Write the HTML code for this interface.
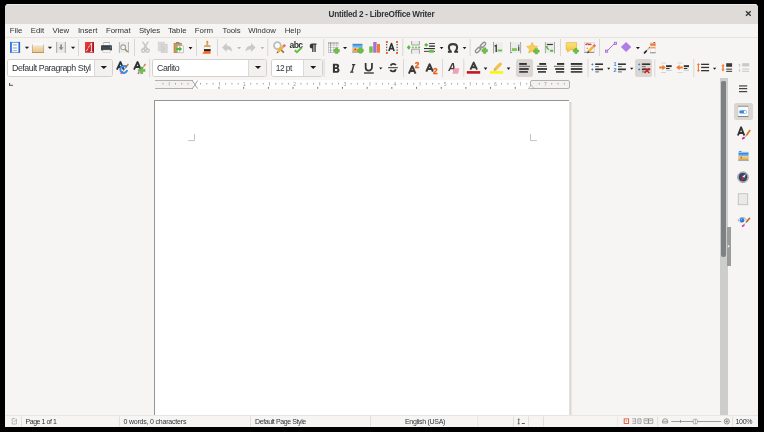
<!DOCTYPE html>
<html><head><meta charset="utf-8">
<style>
*{box-sizing:border-box;margin:0;padding:0}
html,body{width:764px;height:432px;overflow:hidden;background:#000}
body{font-family:"Liberation Sans",sans-serif;position:relative}
.a{position:absolute}
.t{position:absolute;white-space:pre;color:#2e3436;line-height:1}
.mn{font-size:7.8px;top:26.8px}
.st{font-size:7px;top:417.6px;color:#2e3436}
.combo{position:absolute;top:59px;height:17.5px;background:#fff;border:1px solid #d5d0cb;border-radius:2.5px;overflow:hidden}
.cbtn{position:absolute;top:0;bottom:0;right:0;background:#f3f1ef;border-left:1px solid #dcd8d4}
.ct{position:absolute;top:3.8px;font-size:8.8px;letter-spacing:-0.45px;color:#2e3436;white-space:pre;line-height:1}
#svg{position:absolute;left:0;top:0}
</style></head><body><div id="root" style="position:absolute;left:0;top:0;width:764px;height:432px;will-change:transform">
<!-- window -->
<div class="a" style="left:5px;top:4px;width:753px;height:423px;background:#f6f5f4;border-radius:4px 4px 0 0;overflow:hidden">
  <div class="a" style="left:0;top:0;width:753px;height:20px;background:#dedbd8;border-top:1px solid #ecebe9"></div>
</div>
<div class="t" style="left:328.5px;top:11.2px;font-size:8.2px;font-weight:bold;letter-spacing:-0.25px;color:#2e3436">Untitled 2 - LibreOffice Writer</div>

<!-- menu -->
<div class="a" style="left:5px;top:37px;width:753px;height:1px;background:#e6e3df"></div>
<div class="t mn" style="left:9.8px">File</div>
<div class="t mn" style="left:30.8px">Edit</div>
<div class="t mn" style="left:52.4px">View</div>
<div class="t mn" style="left:77.9px">Insert</div>
<div class="t mn" style="left:105.9px">Format</div>
<div class="t mn" style="left:138.9px">Styles</div>
<div class="t mn" style="left:167.9px">Table</div>
<div class="t mn" style="left:194.8px">Form</div>
<div class="t mn" style="left:222.5px">Tools</div>
<div class="t mn" style="left:248.2px">Window</div>
<div class="t mn" style="left:284.7px">Help</div>

<!-- combos -->
<div class="combo" style="left:7px;width:106px"><div class="ct" style="left:4px;width:78.5px;overflow:hidden">Default Paragraph Style</div><div class="cbtn" style="width:17.8px"></div></div>
<div class="combo" style="left:152px;width:114.5px"><div class="ct" style="left:4px">Carlito</div><div class="cbtn" style="width:18px"></div></div>
<div class="combo" style="left:271px;width:51.5px"><div class="ct" style="left:3.8px;top:4px;font-size:8.4px;letter-spacing:-0.55px">12 pt</div><div class="cbtn" style="width:18.3px"></div></div>

<!-- pressed buttons -->
<div class="a" style="left:516px;top:59px;width:17px;height:17.8px;background:#dad6d2;border-radius:2.5px"></div>
<div class="a" style="left:635px;top:59px;width:17px;height:17.8px;background:#dad6d2;border-radius:2.5px"></div>
<div class="a" style="left:734px;top:103px;width:18.8px;height:17.2px;background:#dad6d2;border-radius:2.5px"></div>

<!-- ruler -->
<div class="a" style="left:154.5px;top:80px;width:415px;height:9px;background:#fff"></div>
<div class="a" style="left:154.5px;top:80px;width:38px;height:9px;background:#f3f2f0;border-top:1px solid #b3afab;border-bottom:1px solid #b3afab"></div>
<div class="a" style="left:530px;top:80px;width:39.5px;height:9px;background:#f3f2f0;border:1px solid #b3afab;border-radius:2px"></div>

<!-- page -->
<div class="a" style="left:154px;top:100px;width:415px;height:315px;background:#fff;border-left:1px solid #959595;border-top:1px solid #959595"></div>
<div class="a" style="left:569px;top:101.5px;width:2.5px;height:313.5px;background:linear-gradient(90deg,#e6e4e2,#d9d7d5 45%,#efedeb)"></div>

<!-- scrollbar -->
<div class="a" style="left:720px;top:78px;width:8px;height:337px;background:#cdcdcc"></div>
<div class="a" style="left:721px;top:80.5px;width:4.5px;height:176px;background:#7e8183;border-radius:1.5px 1.5px 2.2px 2.2px"></div>
<div class="a" style="left:727px;top:227px;width:4px;height:39px;background:#999c9d"></div>

<!-- status bar -->
<div class="a" style="left:5px;top:415px;width:753px;height:1px;background:#e8e5e2"></div>
<div class="t st" style="left:25.5px;letter-spacing:-0.45px">Page 1 of 1</div>
<div class="t st" style="left:123.5px;letter-spacing:-0.2px">0 words, 0 characters</div>
<div class="t st" style="left:255px;letter-spacing:-0.4px">Default Page Style</div>
<div class="t st" style="left:405px;letter-spacing:-0.3px">English (USA)</div>
<div class="t st" style="left:735.5px;letter-spacing:-0.3px">100%</div>

<svg id="svg" width="764" height="432" viewBox="0 0 764 432">
<!-- ICONS -->
<rect x="162.49" y="82.9" width="0.9" height="1.6" fill="#9c9c9c"/>
<rect x="168.77" y="82" width="0.9" height="3.6" fill="#b5b5b5"/>
<rect x="175.04" y="82.9" width="0.9" height="1.6" fill="#9c9c9c"/>
<rect x="181.31" y="82.9" width="0.9" height="1.6" fill="#9c9c9c"/>
<rect x="187.58" y="82.9" width="0.9" height="1.6" fill="#9c9c9c"/>
<rect x="200.12" y="82.9" width="0.9" height="1.6" fill="#9c9c9c"/>
<rect x="206.39" y="82.9" width="0.9" height="1.6" fill="#9c9c9c"/>
<rect x="212.66" y="82.9" width="0.9" height="1.6" fill="#9c9c9c"/>
<rect x="218.94" y="82" width="0.9" height="3.6" fill="#b5b5b5"/>
<rect x="225.21" y="82.9" width="0.9" height="1.6" fill="#9c9c9c"/>
<rect x="231.48" y="82.9" width="0.9" height="1.6" fill="#9c9c9c"/>
<rect x="237.75" y="82.9" width="0.9" height="1.6" fill="#9c9c9c"/>
<text x="244.47" y="85.7" text-anchor="middle" font-family="Liberation Sans" font-size="5" fill="#9a9a9a">1</text>
<rect x="250.29" y="82.9" width="0.9" height="1.6" fill="#9c9c9c"/>
<rect x="256.56" y="82.9" width="0.9" height="1.6" fill="#9c9c9c"/>
<rect x="262.83" y="82.9" width="0.9" height="1.6" fill="#9c9c9c"/>
<rect x="269.11" y="82" width="0.9" height="3.6" fill="#b5b5b5"/>
<rect x="275.38" y="82.9" width="0.9" height="1.6" fill="#9c9c9c"/>
<rect x="281.65" y="82.9" width="0.9" height="1.6" fill="#9c9c9c"/>
<rect x="287.92" y="82.9" width="0.9" height="1.6" fill="#9c9c9c"/>
<text x="294.64" y="85.7" text-anchor="middle" font-family="Liberation Sans" font-size="5" fill="#9a9a9a">2</text>
<rect x="300.46" y="82.9" width="0.9" height="1.6" fill="#9c9c9c"/>
<rect x="306.73" y="82.9" width="0.9" height="1.6" fill="#9c9c9c"/>
<rect x="313.00" y="82.9" width="0.9" height="1.6" fill="#9c9c9c"/>
<rect x="319.28" y="82" width="0.9" height="3.6" fill="#b5b5b5"/>
<rect x="325.55" y="82.9" width="0.9" height="1.6" fill="#9c9c9c"/>
<rect x="331.82" y="82.9" width="0.9" height="1.6" fill="#9c9c9c"/>
<rect x="338.09" y="82.9" width="0.9" height="1.6" fill="#9c9c9c"/>
<text x="344.81" y="85.7" text-anchor="middle" font-family="Liberation Sans" font-size="5" fill="#9a9a9a">3</text>
<rect x="350.63" y="82.9" width="0.9" height="1.6" fill="#9c9c9c"/>
<rect x="356.90" y="82.9" width="0.9" height="1.6" fill="#9c9c9c"/>
<rect x="363.17" y="82.9" width="0.9" height="1.6" fill="#9c9c9c"/>
<rect x="369.44" y="82" width="0.9" height="3.6" fill="#b5b5b5"/>
<rect x="375.72" y="82.9" width="0.9" height="1.6" fill="#9c9c9c"/>
<rect x="381.99" y="82.9" width="0.9" height="1.6" fill="#9c9c9c"/>
<rect x="388.26" y="82.9" width="0.9" height="1.6" fill="#9c9c9c"/>
<text x="394.98" y="85.7" text-anchor="middle" font-family="Liberation Sans" font-size="5" fill="#9a9a9a">4</text>
<rect x="400.80" y="82.9" width="0.9" height="1.6" fill="#9c9c9c"/>
<rect x="407.07" y="82.9" width="0.9" height="1.6" fill="#9c9c9c"/>
<rect x="413.34" y="82.9" width="0.9" height="1.6" fill="#9c9c9c"/>
<rect x="419.62" y="82" width="0.9" height="3.6" fill="#b5b5b5"/>
<rect x="425.89" y="82.9" width="0.9" height="1.6" fill="#9c9c9c"/>
<rect x="432.16" y="82.9" width="0.9" height="1.6" fill="#9c9c9c"/>
<rect x="438.43" y="82.9" width="0.9" height="1.6" fill="#9c9c9c"/>
<text x="445.15" y="85.7" text-anchor="middle" font-family="Liberation Sans" font-size="5" fill="#9a9a9a">5</text>
<rect x="450.97" y="82.9" width="0.9" height="1.6" fill="#9c9c9c"/>
<rect x="457.24" y="82.9" width="0.9" height="1.6" fill="#9c9c9c"/>
<rect x="463.51" y="82.9" width="0.9" height="1.6" fill="#9c9c9c"/>
<rect x="469.79" y="82" width="0.9" height="3.6" fill="#b5b5b5"/>
<rect x="476.06" y="82.9" width="0.9" height="1.6" fill="#9c9c9c"/>
<rect x="482.33" y="82.9" width="0.9" height="1.6" fill="#9c9c9c"/>
<rect x="488.60" y="82.9" width="0.9" height="1.6" fill="#9c9c9c"/>
<text x="495.32" y="85.7" text-anchor="middle" font-family="Liberation Sans" font-size="5" fill="#9a9a9a">6</text>
<rect x="501.14" y="82.9" width="0.9" height="1.6" fill="#9c9c9c"/>
<rect x="507.41" y="82.9" width="0.9" height="1.6" fill="#9c9c9c"/>
<rect x="513.68" y="82.9" width="0.9" height="1.6" fill="#9c9c9c"/>
<rect x="519.95" y="82" width="0.9" height="3.6" fill="#b5b5b5"/>
<rect x="526.23" y="82.9" width="0.9" height="1.6" fill="#9c9c9c"/>
<rect x="538.77" y="82.9" width="0.9" height="1.6" fill="#9c9c9c"/>
<text x="545.49" y="85.7" text-anchor="middle" font-family="Liberation Sans" font-size="5" fill="#9a9a9a">7</text>
<rect x="551.31" y="82.9" width="0.9" height="1.6" fill="#9c9c9c"/>
<rect x="557.58" y="82.9" width="0.9" height="1.6" fill="#9c9c9c"/>
<rect x="563.85" y="82.9" width="0.9" height="1.6" fill="#9c9c9c"/>
<rect x="218.49" y="86.9" width="1" height="1.9" fill="#777"/>
<rect x="243.18" y="86.9" width="1" height="1.9" fill="#777"/>
<rect x="267.87" y="86.9" width="1" height="1.9" fill="#777"/>
<rect x="292.56" y="86.9" width="1" height="1.9" fill="#777"/>
<rect x="317.25" y="86.9" width="1" height="1.9" fill="#777"/>
<rect x="341.94" y="86.9" width="1" height="1.9" fill="#777"/>
<rect x="366.63" y="86.9" width="1" height="1.9" fill="#777"/>
<rect x="391.32" y="86.9" width="1" height="1.9" fill="#777"/>
<rect x="416.01" y="86.9" width="1" height="1.9" fill="#777"/>
<rect x="440.70" y="86.9" width="1" height="1.9" fill="#777"/>
<rect x="465.39" y="86.9" width="1" height="1.9" fill="#777"/>
<rect x="490.08" y="86.9" width="1" height="1.9" fill="#777"/>
<rect x="514.77" y="86.9" width="1" height="1.9" fill="#777"/><!-- separators row1 -->
<g fill="#dad6d2">
<rect x="78" y="39" width="1" height="17"/><rect x="134" y="39" width="1" height="17"/><rect x="196" y="39" width="1" height="17"/>
<rect x="217" y="39" width="1" height="17"/><rect x="267.3" y="39" width="1" height="17"/><rect x="323.2" y="39" width="1" height="17"/>
<rect x="402.3" y="39" width="1" height="17"/><rect x="469.6" y="39" width="1" height="17"/><rect x="560" y="39" width="1" height="17"/>
<rect x="599" y="39" width="1" height="17"/>
</g>
<!-- separators row2 -->
<g fill="#dad6d2">
<rect x="149.2" y="59" width="1" height="18"/><rect x="323.6" y="59" width="1" height="18"/><rect x="403" y="59" width="1" height="18"/>
<rect x="442" y="59" width="1" height="18"/><rect x="463.3" y="59" width="1" height="18"/><rect x="587.5" y="59" width="1" height="18"/>
<rect x="654.3" y="59" width="1" height="18"/><rect x="693.3" y="59" width="1" height="18"/>
</g>
<!-- dropdown arrows -->
<g fill="#1a1a1a">
<path d="M24.8 46.8h4.3l-2.15 2.3z"/><path d="M47.8 46.8h4.3l-2.15 2.3z"/><path d="M70.9 46.8h4.3l-2.15 2.3z"/>
<path d="M188.6 46.9h3.8l-1.9 2.5z"/><path d="M343 46.9h4.1l-2.05 2.3z"/><path d="M439.8 46.9h3.6l-1.8 2.3z"/>
<path d="M462.7 46.9h3.6l-1.8 2.3z"/><path d="M635.9 46.9h4l-2 2.3z"/>
<path d="M100.6 66h6.4l-3.2 3.1z"/><path d="M254.9 66.1h6.2l-3.1 2.9z"/><path d="M310.2 66.1h6l-3 2.9z"/>
<path d="M379.2 67.6h3.1l-1.55 1.9z"/><path d="M483.8 67.6h3.5l-1.75 2.3z"/><path d="M506.8 67.6h3.5l-1.75 2.3z"/>
<path d="M607.2 67.8h3l-1.5 2z"/><path d="M630.1 67.8h3.2l-1.6 2z"/><path d="M713 67.8h3.3l-1.65 2z"/>
</g>
<g fill="#b8b8b8"><path d="M237.2 46.9h3.9l-1.95 2.3z"/><path d="M260.5 46.9h3.8l-1.9 2.3z"/></g>

<!-- new doc -->
<defs><linearGradient id="gnd" x1="0" y1="0" x2="1" y2="0"><stop offset="0" stop-color="#2a6cd8"/><stop offset="0.3" stop-color="#6aaaf4"/><stop offset="0.75" stop-color="#5aa2f2"/><stop offset="1" stop-color="#1c56c4"/></linearGradient></defs>
<rect x="10" y="41.9" width="10.1" height="11" fill="url(#gnd)"/>
<rect x="12.1" y="43" width="6.2" height="8.9" fill="#fdfdfd"/>
<g fill="#ababab"><rect x="13.1" y="44.3" width="3.8" height="1.2"/><rect x="13.1" y="47.4" width="3.8" height="1.2"/><rect x="13.1" y="50" width="3.8" height="0.9"/></g>
<!-- open -->
<defs><linearGradient id="gop" x1="0" y1="0" x2="0" y2="1"><stop offset="0" stop-color="#f6e0b8"/><stop offset="1" stop-color="#e6c28a"/></linearGradient></defs>
<rect x="32.2" y="43.3" width="11.6" height="3" fill="#fbfbfb"/>
<rect x="32" y="44.2" width="0.8" height="2" fill="#b8bcc4"/><rect x="43.2" y="44.2" width="0.8" height="2" fill="#b8bcc4"/>
<rect x="32" y="45.6" width="12" height="0.8" fill="#d0d8e4"/>
<rect x="32" y="46.2" width="12" height="6.6" fill="url(#gop)"/>
<rect x="32" y="46.2" width="0.7" height="6.6" fill="#caa468"/><rect x="43.3" y="46.2" width="0.7" height="6.6" fill="#caa468"/>
<rect x="32" y="52.2" width="12" height="0.8" fill="#b08a50"/>
<!-- save -->
<rect x="56" y="41.9" width="10" height="11" fill="#e9e9e8"/>
<rect x="56" y="41.9" width="1.2" height="11" fill="#b4b4b4"/><rect x="64.8" y="41.9" width="1.2" height="11" fill="#b4b4b4"/>
<path d="M60.2 44.5h1.8v2.7h1.6l-2.5 3l-2.5 -3h1.6z" fill="#8c8c8c"/>
<!-- pdf -->
<defs><linearGradient id="gpdf" x1="0" y1="0" x2="1" y2="1"><stop offset="0" stop-color="#e84040"/><stop offset="1" stop-color="#b8161e"/></linearGradient></defs>
<rect x="85" y="42" width="8.9" height="10.7" fill="url(#gpdf)"/>
<rect x="93.1" y="42" width="0.8" height="10.7" fill="#9a1418"/>
<path d="M86.3 51.2l1.6-2.6M88.4 47.6l1.3-2.1M90.1 44.8l0.8-1.3" stroke="#fff" stroke-width="0.9" opacity="0.9"/>
<rect x="90.9" y="43" width="0.9" height="8.6" fill="#fff" opacity="0.95"/>
<rect x="90" y="51.1" width="2.6" height="0.7" fill="#fff" opacity="0.8"/>
<!-- printer -->
<rect x="103.4" y="42.1" width="6.6" height="0.9" fill="#a8a8a8"/>
<rect x="103.4" y="42.1" width="0.7" height="3.2" fill="#c0c0c0"/><rect x="109.3" y="42.1" width="0.7" height="3.2" fill="#c0c0c0"/>
<rect x="104.1" y="43" width="5.2" height="2.3" fill="#fafafa"/>
<defs><linearGradient id="gpr" x1="0" y1="0" x2="0" y2="1"><stop offset="0" stop-color="#2a2e30"/><stop offset="0.5" stop-color="#4a4e50"/><stop offset="1" stop-color="#2a2e30"/></linearGradient></defs>
<rect x="101" y="45.2" width="11" height="5.4" rx="1" fill="url(#gpr)"/>
<rect x="110.3" y="46.4" width="0.9" height="2" fill="#2ea0dc"/>
<rect x="103" y="50" width="7.2" height="2.6" fill="#f8f8f8" stroke="#b8b8b8" stroke-width="0.5"/>
<!-- print preview -->
<rect x="119.2" y="42.1" width="9.4" height="10.8" fill="#ececeb"/>
<rect x="118.9" y="42" width="0.8" height="11" fill="#a8a8a8"/><rect x="128.2" y="42" width="0.8" height="11" fill="#a8a8a8"/>
<circle cx="123.2" cy="47.3" r="2.4" fill="#f4f4f4" stroke="#a4a4a4" stroke-width="1.1"/>
<path d="M125.1 49.2l2.6 2.7" stroke="#9a7a5a" stroke-width="1.3"/>
<!-- cut -->
<path d="M142.3 41.8l4.3 7.4l1-0.6l-4.3-6.6zM148.5 41.8l-4.3 7.4l-1-0.6l4.3-6.6z" fill="#c4c4c4" stroke="#c4c4c4" stroke-width="0.6"/>
<g stroke="#c4c4c4" fill="none" stroke-width="1.5"><circle cx="143.3" cy="50.6" r="1.7"/><circle cx="147.5" cy="50.6" r="1.7"/></g>
<!-- copy -->
<rect x="158.1" y="42.1" width="6.4" height="8.9" fill="#dadada" stroke="#cdcdcd" stroke-width="0.5"/>
<rect x="161.1" y="44.1" width="6.1" height="8.7" fill="#d6d6d6" stroke="#c8c8c8" stroke-width="0.5"/>
<path d="M162.2 46.5l2.5 2.2l-2.5 2.2" stroke="#c4c4c4" stroke-width="0.7" fill="none"/>
<!-- paste -->
<rect x="174" y="43.2" width="7.5" height="9.5" fill="#c99a58" stroke="#a67a3e" stroke-width="0.6"/>
<rect x="176" y="42" width="3.5" height="1.6" fill="#888"/>
<rect x="177.5" y="45.8" width="6" height="7" fill="#fafafa" stroke="#aaa" stroke-width="0.6"/>
<path d="M176.2 48h3v-1.8l3 2.8l-3 2.8v-1.8h-3z" fill="#4cb848"/>
<!-- clone -->
<rect x="206.4" y="41.6" width="1.8" height="3.8" fill="#d8a850"/>
<circle cx="207.3" cy="41.6" r="0.9" fill="#c89040"/>
<rect x="204.2" y="45.2" width="6.2" height="1.8" fill="#d4a050"/>
<rect x="204" y="47" width="6.6" height="2.1" fill="#fdfdfd" stroke="#c8c8c8" stroke-width="0.4"/>
<rect x="204" y="49.1" width="6.6" height="2" fill="#202020"/>
<path d="M204 51.1h6.6v2.2l-0.5 0.5h-8.2l1.2-0.8z" fill="#f06a22"/>
<!-- undo/redo -->
<path d="M222.1 47.5l4.6-4.5v2.7c3.4 0 5.3 2 5.3 6c-1.2-1.8-2.6-2.3-5.3-2.3v2.6z" fill="#c9c9c8"/>
<path d="M255.6 47.5l-4.6-4.5v2.7c-3.4 0-5.3 2-5.3 6c1.2-1.8 2.6-2.3 5.3-2.3v2.6z" fill="#c9c9c8"/>
<!-- find replace -->
<circle cx="277.4" cy="45.6" r="3.4" fill="#fafafa" stroke="#bdbdbd" stroke-width="1.8"/>
<path d="M280.3 49l3.5 3.6" stroke="#8b6a50" stroke-width="1.6"/>
<path d="M284.2 45.6l-6.6 6.6" stroke="#f2b52c" stroke-width="2.5"/>
<path d="M283.4 44.7l1.8 1.8" stroke="#e8609a" stroke-width="2.3"/>
<path d="M277.4 51.5l-1 1.9l1.9-1z" fill="#5a4a3a"/>
<!-- abc -->
<text x="289.5" y="48" font-family="Liberation Sans" font-weight="bold" font-size="8.6" fill="#2e3436" letter-spacing="-0.6">abc</text>
<path d="M294.8 50.2l2.1 2l4.7-4.4" stroke="#5cc23a" stroke-width="1.9" fill="none"/>
<!-- pilcrow -->
<path d="M312.3 43.6h4.2v1.1h-0.8v7.4h-1.3v-7.4h-0.9v7.4h-1.3v-3.5a2.5 2.5 0 0 1 0 -5z" fill="#333"/>
<!-- table -->
<rect x="328" y="42.3" width="10.8" height="10.4" fill="#fdfdfd"/>
<g fill="#b0b0b0"><rect x="328" y="44.8" width="10.8" height="0.6"/><rect x="328" y="47.3" width="10.8" height="0.6"/><rect x="328" y="49.8" width="10.8" height="0.6"/><rect x="328" y="52.2" width="10.8" height="0.6"/>
<rect x="333.6" y="42" width="0.6" height="10.8"/><rect x="336.6" y="42" width="0.6" height="10.8"/><rect x="328" y="42" width="0.6" height="10.8"/></g>
<rect x="328" y="42.6" width="10.8" height="0.9" fill="#8a8a8a"/>
<rect x="330.3" y="42" width="0.8" height="10.8" fill="#8a8a8a"/>
<path d="M335.45 47.90h2.30v1.65h1.65v2.30h-1.65v1.65h-2.30v-1.65h-1.65v-2.30h1.65z" fill="#6cc43e" stroke="#4a9a2a" stroke-width="0.4" stroke-linejoin="round"/>
<!-- image -->
<defs><linearGradient id="gimg" x1="0" y1="0" x2="0" y2="1"><stop offset="0" stop-color="#2a82dc"/><stop offset="1" stop-color="#a8d8f4"/></linearGradient>
<linearGradient id="gimg2" x1="0" y1="0" x2="0" y2="1"><stop offset="0" stop-color="#f2c870"/><stop offset="1" stop-color="#e89830"/></linearGradient></defs>
<rect x="352.6" y="44" width="9.8" height="4.2" fill="url(#gimg)"/>
<rect x="352.6" y="48.1" width="9.8" height="3.7" fill="url(#gimg2)"/>
<ellipse cx="355.2" cy="49.2" rx="1" ry="0.7" fill="#d83020"/>
<rect x="352" y="51.8" width="10.6" height="0.8" fill="#888"/>
<rect x="352.3" y="43.8" width="10.4" height="8.2" fill="none" stroke="#bbb" stroke-width="0.4"/>
<path d="M359.45 47.70h2.30v1.65h1.65v2.30h-1.65v1.65h-2.30v-1.65h-1.65v-2.30h1.65z" fill="#6cc43e" stroke="#4a9a2a" stroke-width="0.4" stroke-linejoin="round"/>
<!-- chart -->
<rect x="369.2" y="46.4" width="3.5" height="6.3" fill="#6fbf4b"/>
<rect x="373.2" y="42" width="3.4" height="10.7" fill="#a571d8"/>
<rect x="377" y="44" width="3" height="8.7" fill="#f47b2b"/>
<!-- text box -->
<path d="M388.9 51.1l2.6-7.6l2.6 7.6M389.9 48.6h3.3" stroke="#333" stroke-width="1.6" fill="none" stroke-linejoin="round"/>
<g fill="#333"><rect x="386.2" y="44" width="1" height="1.3"/><rect x="386.2" y="46.8" width="1" height="1.3"/><rect x="386.2" y="49.5" width="1" height="1.3"/>
<rect x="396.6" y="44" width="1" height="1.3"/><rect x="396.6" y="46.8" width="1" height="1.3"/><rect x="396.6" y="49.5" width="1" height="1.3"/></g>
<g fill="#e8602a"><rect x="385.9" y="41.1" width="2" height="1.9"/><rect x="396" y="41.1" width="2" height="1.9"/><rect x="385.9" y="51.9" width="2" height="2"/><rect x="396" y="51.9" width="2" height="2"/></g>
<!-- page break -->
<rect x="411.6" y="41" width="7.8" height="4" fill="#ebebea"/>
<rect x="411.6" y="49.2" width="7.8" height="4.5" fill="#ebebea"/>
<path d="M411.6 41v4h7.8v-4M411.6 53.7v-4.5h7.8v4.5" stroke="#9c9c9c" stroke-width="0.9" fill="none"/>
<path d="M406.9 47.4l1.9-2.3l1.9 2.3l-1.9 2.4z" fill="#5cb83a"/>
<circle cx="412.9" cy="47.4" r="0.95" fill="#6cc04a"/><circle cx="416" cy="47.4" r="0.95" fill="#6cc04a"/><rect x="418" y="46.6" width="2.2" height="1.6" rx="0.8" fill="#6cc04a"/>
<!-- field -->
<path d="M424 44.9l2.25-1.9l2.25 1.9l-2.25 1.9z" fill="#5cb83a"/>
<rect x="429.1" y="43.1" width="5.8" height="0.9" fill="#333"/>
<rect x="429.1" y="45.4" width="5.8" height="1.5" fill="#444"/>
<rect x="424" y="48" width="10.9" height="1.1" fill="#333"/>
<rect x="424" y="50.9" width="10.9" height="0.9" fill="#333"/>
<rect x="429.1" y="49.9" width="4.8" height="2.7" rx="1.2" fill="#6cc04a" stroke="#3f9a20" stroke-width="0.3"/>
<!-- omega -->
<path d="M450.8 51.6C449.2 50.2 448.9 48.7 448.9 47.5C448.9 45 450.6 44.1 453 44.1C455.4 44.1 457.1 45 457.1 47.5C457.1 48.7 456.8 50.2 455.2 51.6" stroke="#3c3c3c" stroke-width="2.1" fill="none"/>
<rect x="447.9" y="50.9" width="3.9" height="1.9" fill="#3c3c3c"/><rect x="454.2" y="50.9" width="3.9" height="1.9" fill="#3c3c3c"/>
<!-- hyperlink -->
<g transform="rotate(-45 480.5 47.5)" fill="none" stroke="#8c8c8c" stroke-width="1.3">
<rect x="473.8" y="46" width="6.4" height="3" rx="1.5"/>
<rect x="480.8" y="46" width="6.4" height="3" rx="1.5"/>
<path d="M478.5 47.5h4" stroke="#a0a0a0"/>
</g>
<path d="M483.55 47.80h2.30v1.65h1.65v2.30h-1.65v1.65h-2.30v-1.65h-1.65v-2.30h1.65z" fill="#6cc43e" stroke="#4a9a2a" stroke-width="0.4" stroke-linejoin="round"/>
<!-- footnote -->
<rect x="493.4" y="42.2" width="9.2" height="11" fill="#ececeb"/>
<rect x="493" y="42" width="0.9" height="11.3" fill="#9a9a9a"/>
<path d="M494.6 46.3l1.6-1v6.6" stroke="#2e2e2e" stroke-width="1.3" fill="none"/>
<rect x="497.6" y="49.6" width="4.6" height="1.8" fill="#6cc04a"/>
<!-- endnote -->
<rect x="510.4" y="42.2" width="10.2" height="11" fill="#ececeb"/>
<rect x="510" y="42" width="0.9" height="11.3" fill="#a0a0a0"/><rect x="520.2" y="42" width="0.9" height="11.3" fill="#a0a0a0"/>
<rect x="511.8" y="48.2" width="5.1" height="2.7" fill="#79c552"/>
<rect x="518.2" y="44.8" width="1.1" height="0.9" fill="#2e2e2e"/><rect x="518.2" y="46.5" width="1.1" height="4.4" fill="#2e2e2e"/>
<rect x="511.2" y="52.1" width="0.8" height="0.8" fill="#555"/>
<!-- star -->
<path d="M532.2 42.3l1.7 3.6l3.9 0.5l-2.9 2.7l0.8 3.9l-3.5-1.9l-3.5 1.9l0.8-3.9l-2.9-2.7l3.9-0.5z" fill="#f7cf55" stroke="#e3a22e" stroke-width="0.5"/>
<path d="M535.25 48.40h2.30v1.65h1.65v2.30h-1.65v1.65h-2.30v-1.65h-1.65v-2.30h1.65z" fill="#6cc43e" stroke="#4a9a2a" stroke-width="0.4" stroke-linejoin="round"/>
<!-- cross ref -->
<rect x="545.3" y="42.2" width="9.1" height="11" fill="#ececeb"/>
<rect x="544.9" y="42" width="0.9" height="11.3" fill="#a0a0a0"/><rect x="554" y="42" width="0.9" height="11.3" fill="#a0a0a0"/>
<rect x="546.8" y="43.9" width="6.1" height="1.2" fill="#3a3a3a"/>
<path d="M548.8 49.8l-2.2-2.4" stroke="#5cb83a" stroke-width="1.4"/>
<path d="M545.6 46l2.8 0.2l-2.2 2.2z" fill="#5cb83a"/>
<rect x="549.9" y="49.8" width="3.4" height="1.9" rx="0.9" fill="#5cb83a"/>
<!-- comment -->
<defs><linearGradient id="gcm" x1="0" y1="0" x2="0" y2="1"><stop offset="0" stop-color="#fce37c"/><stop offset="1" stop-color="#f1c23a"/></linearGradient></defs>
<path d="M566.2 42.6h10.4v7.3h-6.6l-2.4 2.4v-2.4h-1.4z" fill="url(#gcm)" stroke="#d6a52a" stroke-width="0.5"/>
<path d="M574.85 48.40h2.10v1.55h1.55v2.10h-1.55v1.55h-2.10v-1.55h-1.55v-2.10h1.55z" fill="#6cc43e" stroke="#4a9a2a" stroke-width="0.4" stroke-linejoin="round"/>
<!-- track changes -->
<rect x="584.4" y="42.4" width="9.8" height="10.3" fill="#f4f4f4" stroke="#c8c8c8" stroke-width="0.5"/>
<path d="M585.6 45c1.2-1.6 2.6-1.4 3.4-0.3c0.8-1 1.8-0.8 2.2 0.3" stroke="#d83a3a" stroke-width="1.3" fill="none"/>
<rect x="586.6" y="47.8" width="1.2" height="1" fill="#e06060"/>
<rect x="584.4" y="51.8" width="9.8" height="0.9" fill="#777"/>
<path d="M594.3 45.6l-6.2 6.2" stroke="#f2b52c" stroke-width="2.5"/>
<path d="M593.6 44.8l1.7 1.7" stroke="#e8609a" stroke-width="2.2"/>
<path d="M588.2 51l-1.2 2.4l2.4-1.2z" fill="#2a2a2a"/>
<!-- line -->
<path d="M607.2 50.9l7.6-7.6" stroke="#9b5fd3" stroke-width="0.9"/>
<rect x="605.6" y="50.1" width="2.1" height="2.1" fill="#e6d6f6" stroke="#9b5fd3" stroke-width="0.8"/>
<rect x="614.3" y="42.3" width="2.1" height="2.1" fill="#e6d6f6" stroke="#9b5fd3" stroke-width="0.8"/>
<!-- diamond -->
<path d="M626.1 41.9l5.2 5.1l-5.2 5.1l-5.2-5.1z" fill="#b07de6"/>
<!-- draw functions -->
<rect x="650.2" y="42.6" width="5.4" height="10.6" fill="#f8f8f8" stroke="#cfcfcf" stroke-width="0.4"/>
<rect x="650.2" y="43.4" width="5.4" height="2.4" fill="#ee7a34"/>
<rect x="653.5" y="42" width="1.6" height="1.2" fill="#9a5a20"/>
<rect x="650.6" y="46.8" width="4.8" height="1.7" fill="#f4a060"/>
<rect x="650.2" y="52.2" width="5.4" height="1" fill="#8a8a8a"/>
<path d="M649.6 47.5l-3.6 3.8" stroke="#bdbdbd" stroke-width="1.2"/>
<circle cx="649.5" cy="47.5" r="0.7" fill="#b06020"/>
<path d="M646.3 51l-1.8 1.9" stroke="#1e1e1e" stroke-width="1.6" stroke-linecap="round"/>
<!-- update style -->
<path d="M116.9 69.6l3.6-7.6l3.2 7.6M118.3 67h4.3" stroke="#2e3436" stroke-width="1.9" fill="none" stroke-linejoin="round"/>
<path d="M127.1 70a3.4 3.4 0 1 1 -1.4 -3.3" fill="none" stroke="#3a8ee6" stroke-width="2"/>
<path d="M124 64.9l3.5 0.3l-1.2 3.1z" fill="#3a8ee6"/>
<path d="M128.4 63.8l-1.6 2.4" stroke="#e0701a" stroke-width="1.3"/>
<path d="M126.8 66.2l-4.8 6.2" stroke="#555" stroke-width="0.6"/>
<path d="M122.2 72.3l-1.5 1.4" stroke="#e040a0" stroke-width="1.5"/>
<!-- new style -->
<path d="M134 69.6l3.6-7.6l3.2 7.6M135.4 67h4.3" stroke="#2e3436" stroke-width="1.9" fill="none" stroke-linejoin="round"/>
<path d="M140.4 67h2.4v2.2h2.3v2.4h-2.3v2.2h-2.4v-2.2h-2.2v-2.4h2.2z" fill="#6cc04a" stroke="#4a9a2a" stroke-width="0.3"/>
<path d="M145.5 63.8l-1.6 2.4" stroke="#e0701a" stroke-width="1.3"/>
<path d="M143.9 66.2l-2.2 2.8" stroke="#555" stroke-width="0.6"/>
<path d="M139.3 72.3l-1.5 1.4" stroke="#e040a0" stroke-width="1.5"/>
<!-- B I U S -->
<path fill-rule="evenodd" fill="#353535" d="M332.9 63.8H336.6C338.4 63.8 339.1 64.8 339.1 66C339.1 67 338.6 67.7 337.9 68C338.9 68.3 339.5 69.1 339.5 70.2C339.5 71.7 338.5 72.8 336.6 72.8H332.9ZM335 65.5H336.2C336.8 65.5 337.1 65.9 337.1 66.35C337.1 66.8 336.8 67.2 336.2 67.2H335ZM335 68.9H336.4C337.1 68.9 337.4 69.35 337.4 69.95C337.4 70.55 337.1 71.1 336.4 71.1H335Z"/>
<path d="M352 64.6h3.3M350.1 72.1h3.3" stroke="#3a3a3a" stroke-width="1.1"/>
<path d="M353.9 64.6l-2.1 7.5" stroke="#3a3a3a" stroke-width="1.5"/>
<path d="M365.65 62.9V67.5A3.15 3.15 0 0 0 371.95 67.5V62.9" stroke="#363636" stroke-width="1.75" fill="none"/>
<rect x="364" y="72.2" width="9.8" height="1.6" fill="#555"/>
<path d="M390.6 65.6C391.3 63.6 394.7 63.2 395.8 65.1" stroke="#333" stroke-width="1.8" fill="none"/>
<rect x="388.1" y="67.1" width="9.7" height="1.1" fill="#444"/>
<path d="M390.3 69.9C391.3 72 395.2 72 395.8 69.3" stroke="#333" stroke-width="1.9" fill="none"/>
<!-- super/sub -->
<path d="M408.9 73.6l3.3-7.4l3.3 7.4M410.1 71.1h4.2" stroke="#3a3a3a" stroke-width="2" fill="none" stroke-linejoin="round"/>
<text x="414.8" y="68.1" font-family="Liberation Sans" font-weight="bold" font-size="8.3" fill="#e8601c" stroke="#e8601c" stroke-width="0.35">2</text>
<path d="M426.3 71.6l3.3-7.4l3.3 7.4M427.5 69.1h4.2" stroke="#3a3a3a" stroke-width="2" fill="none" stroke-linejoin="round"/>
<text x="433.1" y="73.8" font-family="Liberation Sans" font-weight="bold" font-size="8.3" fill="#e8601c" stroke="#e8601c" stroke-width="0.35">2</text>
<!-- clear formatting -->
<text x="448.2" y="71.4" font-family="Liberation Sans" font-weight="bold" font-style="italic" font-size="10.5" fill="#3a3a3a">A</text>
<path d="M453.8 68.3h5.6l-1.3 5.4h-5.6z" fill="#f29cc0"/>
<!-- font color -->
<path d="M470.4 69.6l3.3-7l3.3 7M471.5 67.2h4.4" stroke="#3a3a3a" stroke-width="1.9" fill="none" stroke-linejoin="round"/>
<rect x="466.8" y="71.1" width="13.4" height="2.6" fill="#c8141e"/>
<!-- highlight -->
<path d="M500.3 64.2l-4.6 4.6" stroke="#f2c24c" stroke-width="3.3" stroke-linecap="round"/>
<path d="M495.3 69.2l-1.4 1.3" stroke="#a8aab0" stroke-width="1.6"/>
<rect x="489.9" y="71.1" width="13.3" height="2.6" fill="#fef600"/>
<!-- align -->
<g fill="#333">
<rect x="519.2" y="63" width="7.6" height="1.9"/><rect x="519.2" y="65.8" width="10.8" height="0.9" fill="#555"/><rect x="519.2" y="68.1" width="9.5" height="1.8"/><rect x="519.2" y="71.1" width="8.7" height="1.6"/>
<rect x="539.3" y="63" width="6.8" height="1.9"/><rect x="536.9" y="65.8" width="10.1" height="0.9" fill="#555"/><rect x="537" y="68.1" width="10" height="1.8"/><rect x="538" y="71.1" width="8" height="1.6"/>
<rect x="557" y="63" width="7.2" height="1.9"/><rect x="553.9" y="65.8" width="10.3" height="0.9" fill="#555"/><rect x="555.2" y="68.1" width="9" height="1.8"/><rect x="556" y="71.1" width="8.2" height="1.6"/>
<rect x="570.8" y="63" width="11.5" height="1.9"/><rect x="570.8" y="65.8" width="11.5" height="0.9" fill="#555"/><rect x="570.8" y="68.1" width="11.5" height="1.8"/><rect x="570.8" y="71.1" width="11.5" height="1.6"/>
</g>
<!-- bullets -->
<g fill="#3a7fd8">
<path d="M592.4 63.2l1.2 1.2l-1.2 1.2l-1.2-1.2z"/><path d="M592.4 68.3l1.2 1.2l-1.2 1.2l-1.2-1.2z"/>
<path d="M639.2 63.2l1.2 1.2l-1.2 1.2l-1.2-1.2z"/><path d="M639.2 68.3l1.2 1.2l-1.2 1.2l-1.2-1.2z"/>
</g>
<g fill="#333">
<rect x="595.2" y="63.4" width="7.8" height="1.6"/><rect x="595.2" y="66.2" width="3.8" height="0.9" fill="#666"/><rect x="595.2" y="68.5" width="7.8" height="1.7"/><rect x="595.2" y="71.4" width="3.8" height="1" fill="#666"/>
<rect x="618" y="63.4" width="7.9" height="1.6"/><rect x="618" y="66.2" width="3.8" height="0.9" fill="#666"/><rect x="618" y="68.5" width="7.9" height="1.7"/><rect x="618" y="71.4" width="3.8" height="1" fill="#666"/>
<rect x="641.9" y="63.4" width="8.3" height="1.6"/><rect x="641.9" y="66.2" width="3.8" height="0.9" fill="#666"/><rect x="641.9" y="68.5" width="8.3" height="1.7"/><rect x="641.9" y="71.4" width="3.8" height="1" fill="#666"/>
</g>
<text x="613.6" y="66.3" font-family="Liberation Sans" font-weight="bold" font-size="5.6" fill="#3a7fd8">1</text>
<text x="613.4" y="72.3" font-family="Liberation Sans" font-weight="bold" font-size="5.6" fill="#3a7fd8">2</text>
<path d="M644.6 68.4l4.8 4.6M649.4 68.4l-4.8 4.6" stroke="#cc1f1f" stroke-width="1.5"/>
<!-- indent -->
<path d="M659.2 66.4h3.2v-1.6l3.4 2.7l-3.4 2.7v-1.6h-3.2z" fill="#f07a30"/>
<path d="M682.8 66.4h-3.2v-1.6l-3.4 2.7l3.4 2.7v-1.6h3.2z" fill="#f07a30"/>
<g fill="#2e2e2e">
<rect x="666.1" y="65.2" width="5.6" height="1.9"/><rect x="666.1" y="68" width="3.5" height="1"/>
<rect x="683.8" y="65.2" width="5.2" height="1.9"/><rect x="683.8" y="68" width="3.5" height="1"/>
</g>
<g fill="#b5b5b5">
<rect x="666.1" y="69.8" width="5.6" height="0.8"/><rect x="661" y="62.8" width="5" height="0.5"/><rect x="661" y="72.2" width="5" height="0.5"/>
<rect x="683.8" y="69.8" width="5.2" height="0.8"/><rect x="677.5" y="62.8" width="5" height="0.5"/><rect x="677.5" y="72.2" width="5" height="0.5"/>
</g>
<!-- line spacing -->
<path d="M698.4 62.9l1.6 2h-1v5.2h1l-1.6 2l-1.6-2h1v-5.2h-1z" fill="#f07a30"/>
<g fill="#333"><rect x="701.1" y="63.7" width="8" height="1.3"/><rect x="701.1" y="66.8" width="8" height="1.3"/><rect x="701.1" y="70" width="8" height="1.3"/></g>
<!-- para spacing -->
<path d="M723 63.9l1.7 2h-1v3.5h1l-1.7 2l-1.7-2h1v-3.5h-1z" fill="#f07a30"/>
<rect x="726.2" y="63.2" width="5.9" height="3.6" fill="#3a3a3a"/>
<rect x="726.2" y="68.6" width="5.9" height="1.1" fill="#444"/><rect x="726.2" y="70.8" width="5.9" height="1.1" fill="#444"/>
<!-- disabled -->
<g fill="#c8c8c8">
<rect x="742.2" y="63.2" width="7" height="3.2"/><rect x="742.2" y="68.6" width="7" height="1"/><rect x="742.2" y="70.8" width="7" height="1"/>
<path d="M739.5 63.4l1.2 1.5h-0.7v1.2h-1v-1.2h-0.7z"/><path d="M739.5 72l1.2-1.5h-0.7v-1.2h-1v1.2h-0.7z"/>
<rect x="739" y="66.4" width="1" height="1"/>
</g>
<!-- ruler markers -->
<path d="M192.4 80.6l5.2 8M197.6 80.6l-5.2 8" stroke="#888" stroke-width="0.8"/>
<path d="M528.4 88.6l2.8-3.7l2.8 3.7z" fill="#f3f3f3" stroke="#999" stroke-width="0.6"/>
<!-- page corner marks -->
<g stroke="#bdbdbd" stroke-width="0.9" fill="none">
<path d="M194.5 133.8v6.8h-6.6"/><path d="M530.5 133.8v6.8h6.4"/>
</g>
<!-- close X -->
<path d="M746 11.2l4.7 4.6M750.7 11.2l-4.7 4.6" stroke="#2e3436" stroke-width="1.3"/>
<!-- sidebar -->
<g fill="#2e3436"><rect x="739" y="85.4" width="8.2" height="1.1"/><rect x="739" y="88.1" width="8.2" height="1.1"/><rect x="739" y="91.1" width="8.2" height="1.1"/></g>
<rect x="738" y="106" width="10.2" height="10.8" fill="#fbfbfb" stroke="#c4c4c4" stroke-width="0.5"/>
<rect x="738" y="105.8" width="10.2" height="0.9" fill="#8a8a8a"/>
<rect x="738" y="116" width="10.2" height="0.9" fill="#7a7a7a"/>
<rect x="739.2" y="110.3" width="7.6" height="3.3" rx="1.65" fill="#3a8ae8"/>
<circle cx="745.1" cy="111.95" r="1.25" fill="#fff"/>
<path d="M737.9 135.5l3.2-8.2l3.2 8.2M739 133h4.2" stroke="#333" stroke-width="1.9" fill="none" stroke-linejoin="round"/>
<path d="M749.8 130.6l-3.1 4.4" stroke="#e07a1a" stroke-width="1.8" stroke-linecap="round"/>
<path d="M746.6 135.2l-1.3 1.7" stroke="#b8b8b8" stroke-width="1.3"/>
<ellipse cx="743.4" cy="138.1" rx="1.7" ry="1.1" transform="rotate(-30 743.4 138.1)" fill="#d02aa8"/>
<!-- gallery -->
<defs>
<linearGradient id="gsky" x1="0" y1="0" x2="0" y2="1"><stop offset="0" stop-color="#1f74d0"/><stop offset="1" stop-color="#9fd4f5"/></linearGradient>
<linearGradient id="gsand" x1="0" y1="0" x2="0" y2="1"><stop offset="0" stop-color="#f3cf78"/><stop offset="1" stop-color="#e9a43a"/></linearGradient>
</defs>
<path d="M738.6 151.2h3.6l0.6 0.8h5.6v8.6h-9.8z" fill="#fafafa" stroke="#c8c8c8" stroke-width="0.5"/>
<rect x="739.1" y="151" width="2.4" height="1" rx="0.5" fill="#3a8ee0"/>
<rect x="738.6" y="152.6" width="9.8" height="4.2" fill="url(#gsky)"/>
<rect x="738.6" y="156.6" width="9.8" height="3.4" fill="url(#gsand)"/>
<rect x="738.2" y="159.9" width="10.6" height="0.7" fill="#888"/>
<ellipse cx="741.2" cy="157.6" rx="0.6" ry="1" fill="#d63a2a"/>
<!-- navigator -->
<circle cx="743" cy="177.2" r="5.4" fill="#d5d5d5" stroke="#8a8a8a" stroke-width="0.7"/>
<circle cx="743" cy="177.2" r="4.1" fill="#34456e" stroke="#222" stroke-width="0.4"/>
<path d="M745.9 174.1l-1.6 3.9l-2-1.6z" fill="#f0f0f0"/>
<path d="M741.2 181l1.1-4.6l2 1.6z" fill="#e0202a"/>
<!-- page -->
<rect x="738.2" y="193.8" width="9.6" height="11" fill="#e9e9e9" stroke="#aaa" stroke-width="0.6"/>
<!-- style inspector -->
<path d="M738.2 221c0.8-2.6 2.5-3.5 4.2-3.5c1.8 0 3.2 0.9 4 2.6" fill="none" stroke="#8a8a8a" stroke-width="0.8"/>
<path d="M738.4 221.2c1 1 2.2 1.3 3.4 1.3" fill="none" stroke="#bbb" stroke-width="0.6"/>
<circle cx="742.1" cy="220.2" r="2.3" fill="#2a7ae0"/>
<circle cx="741.6" cy="219.6" r="0.6" fill="#9cc8f8"/>
<path d="M749.6 218.2l-3.2 3.8" stroke="#b8641e" stroke-width="1.5" stroke-linecap="round"/>
<path d="M746.4 222l-1.6 1.8" stroke="#bdbdbd" stroke-width="1"/>
<ellipse cx="743.3" cy="225.6" rx="1.9" ry="0.9" transform="rotate(-40 743.3 225.6)" fill="#d62aa6"/>
<!-- status bar icons -->
<path d="M16.4 419.2v4.8h-4.2v-5.4h3" fill="none" stroke="#a0a0a0" stroke-width="0.7"/><path d="M13.3 420.6l1.1 1.1l2.4-2.7" fill="none" stroke="#9a9a9a" stroke-width="0.6"/>
<g fill="#dcd8d4">
<rect x="21" y="416.5" width="0.8" height="10"/><rect x="119" y="416.5" width="0.8" height="10"/><rect x="250" y="416.5" width="0.8" height="10"/>
<rect x="370" y="416.5" width="0.8" height="10"/><rect x="513" y="416.5" width="0.8" height="10"/><rect x="528.2" y="416.5" width="0.8" height="10"/>
<rect x="543" y="416.5" width="0.8" height="10"/><rect x="477.3" y="416.5" width="0.8" height="10" opacity="0.6"/><rect x="617" y="416.5" width="0.8" height="10" opacity="0.6"/><rect x="657.3" y="416.5" width="0.8" height="10"/><rect x="732.3" y="416.5" width="0.8" height="10"/>
</g>
<path d="M517.7 419.2h2M518.7 419.2v4.6M517.7 423.8h2" stroke="#333" stroke-width="0.7"/>
<rect x="521.8" y="423.1" width="3" height="0.8" fill="#333"/>
<rect x="624.2" y="418.9" width="4.4" height="4.6" fill="#fff" stroke="#d9542a" stroke-width="0.9"/>
<rect x="625.6" y="420.3" width="1.6" height="1.4" fill="#e88a6a"/>
<g stroke="#666" stroke-width="0.55" fill="none">
<path d="M632.3 418.8h3.6M635.6 418.8v4.6M632.3 423.4h3.6M632.3 421.1h2.6"/>
<path d="M637.8 418.8h3.2v4.6h-3.2M637.8 418.8v4.6M638.6 421h1.6"/>
<path d="M644.1 418.8h4.2v4.6h-4.2zM648.6 418.8h4.2v4.6h-4.2zM645 420.6h2.5M649.5 420.6h2.5"/>
</g>
<path d="M662.5 421.4a2.6 2.6 0 0 1 5.2 0v1.6h-5.2z" fill="none" stroke="#777" stroke-width="0.7"/>
<path d="M662.5 421.3h5.2" stroke="#777" stroke-width="0.7"/>
<rect x="671.2" y="421" width="50" height="0.8" fill="#888"/>
<rect x="680" y="419.8" width="0.8" height="3" fill="#888"/>
<rect x="693.2" y="419.2" width="4.2" height="4.6" rx="1.2" fill="#f6f5f4" stroke="#888" stroke-width="0.6"/>
<path d="M695.3 419.4v4.2" stroke="#888" stroke-width="0.6"/>
<circle cx="726.8" cy="421.4" r="2.6" fill="none" stroke="#777" stroke-width="0.8"/>
<path d="M725.2 421.4h3.2M726.8 419.8v3.2" stroke="#777" stroke-width="0.8"/>
<rect x="9" y="83" width="1.1" height="2.8" fill="#5a5a5a"/><rect x="9" y="84.8" width="4" height="1" fill="#5a5a5a"/>
<path d="M727.8 244.8l2 1.5l-2 1.5z" fill="#f4f4f4"/>

</svg>
</div></body></html>
